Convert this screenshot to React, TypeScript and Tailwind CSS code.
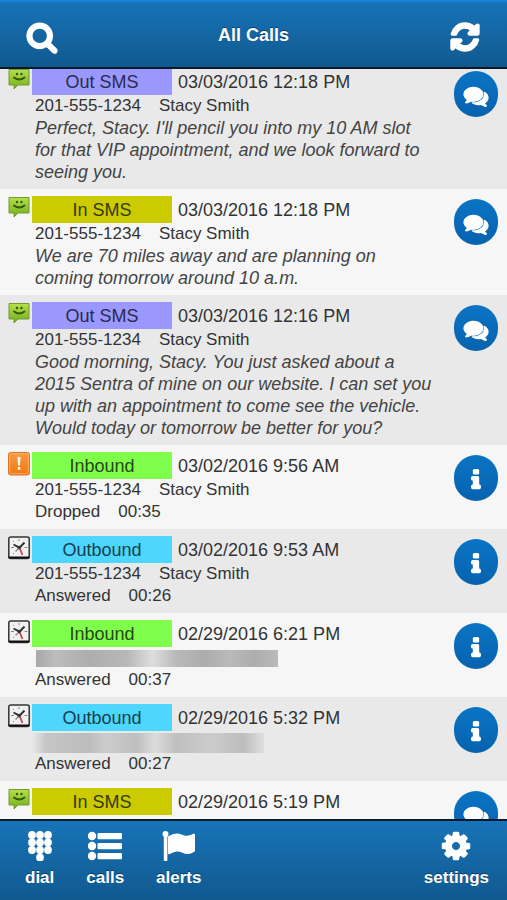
import type { ReactNode } from "react";

type Kind = "Out SMS" | "In SMS" | "Inbound" | "Outbound";

type Call = {
  id: number;
  kind: Kind;
  date: string;
  phone?: string;
  name?: string;
  message?: string;
  status?: "Answered" | "Dropped";
  duration?: string;
  mask?: "sharp" | "soft";
};

const calls: Call[] = [
  {
    id: 1,
    kind: "Out SMS",
    date: "03/03/2016 12:18 PM",
    phone: "201-555-1234",
    name: "Stacy Smith",
    message:
      "Perfect, Stacy. I'll pencil you into my 10 AM slot for that VIP appointment, and we look forward to seeing you.",
  },
  {
    id: 2,
    kind: "In SMS",
    date: "03/03/2016 12:18 PM",
    phone: "201-555-1234",
    name: "Stacy Smith",
    message: "We are 70 miles away and are planning on coming tomorrow around 10 a.m.",
  },
  {
    id: 3,
    kind: "Out SMS",
    date: "03/03/2016 12:16 PM",
    phone: "201-555-1234",
    name: "Stacy Smith",
    message:
      "Good morning, Stacy. You just asked about a 2015 Sentra of mine on our website. I can set you up with an appointment to come see the vehicle. Would today or tomorrow be better for you?",
  },
  {
    id: 4,
    kind: "Inbound",
    date: "03/02/2016 9:56 AM",
    phone: "201-555-1234",
    name: "Stacy Smith",
    status: "Dropped",
    duration: "00:35",
  },
  {
    id: 5,
    kind: "Outbound",
    date: "03/02/2016 9:53 AM",
    phone: "201-555-1234",
    name: "Stacy Smith",
    status: "Answered",
    duration: "00:26",
  },
  { id: 6, kind: "Inbound", date: "02/29/2016 6:21 PM", status: "Answered", duration: "00:37", mask: "sharp" },
  { id: 7, kind: "Outbound", date: "02/29/2016 5:32 PM", status: "Answered", duration: "00:27", mask: "soft" },
  { id: 8, kind: "In SMS", date: "02/29/2016 5:19 PM" },
];

const badgeColors: Record<Kind, string> = {
  "Out SMS": "bg-[#9a98fe] text-[#2b2b4a]",
  "In SMS": "bg-[#cbcb00] text-[#38380c]",
  Inbound: "bg-[#80fe4c] text-[#244716]",
  Outbound: "bg-[#4dd6fe] text-[#163e4c]",
};

function Glyph({ d, className, weight = 0 }: { d: string; className: string; weight?: number }) {
  return (
    <svg
      viewBox="0 0 1792 1792"
      fill="currentColor"
      stroke="currentColor"
      strokeWidth={weight}
      strokeLinejoin="round"
      className={`overflow-visible ${className}`}
      aria-hidden="true"
    >
      <path d={d} />
    </svg>
  );
}

const SEARCH =
  "M1216 832q0-185-131.5-316.5t-316.5-131.5-316.5 131.5-131.5 316.5 131.5 316.5 316.5 131.5 316.5-131.5 131.5-316.5zm512 832q0 52-38 90t-90 38q-54 0-90-38l-343-342q-179 124-399 124-143 0-273.5-55.5t-225-150-150-225-55.5-273.5 55.5-273.5 150-225 225-150 273.5-55.5 273.5 55.5 225 150 150 225 55.5 273.5q0 220-124 399l343 343q37 37 37 90z";
const REFRESH =
  "M1639 1056q0 5-1 7-64 268-268 434.5t-478 166.5q-146 0-282.5-55t-243.5-157l-129 129q-19 19-45 19t-45-19-19-45v-448q0-26 19-45t45-19h448q26 0 45 19t19 45-19 45l-137 137q71 66 161 102t187 36q134 0 250-65t186-179q11-17 53-117 8-23 30-23h192q13 0 22.5 9.5t9.5 22.5zm25-800v448q0 26-19 45t-45 19h-448q-26 0-45-19t-19-45 19-45l138-138q-148-137-349-137-134 0-250 65t-186 179q-11 17-53 117-8 23-30 23h-199q-13 0-22.5-9.5t-9.5-22.5v-7q65-268 270-434.5t480-166.5q146 0 284 55.5t245 156.5l130-129q19-19 45-19t45 19 19 45z";
const COG =
  "M1152 896q0-106-75-181t-181-75-181 75-75 181 75 181 181 75 181-75 75-181zm512-109v222q0 12-8 23t-20 13l-185 28q-19 54-39 91 35 50 107 138 10 12 10 25t-9 23q-27 37-99 108t-94 71q-12 0-26-9l-138-108q-44 23-91 38-16 136-29 186-7 28-36 28h-222q-14 0-24.5-8.5t-11.5-21.5l-28-184q-49-16-90-37l-141 107q-10 9-25 9-14 0-25-11-126-114-165-168-7-10-7-23 0-12 8-23 15-21 51-66.5t54-70.5q-27-50-41-99l-183-27q-13-2-21-12.5t-8-23.5v-222q0-12 8-23t19-13l186-28q14-46 39-92-40-57-107-138-10-12-10-24 0-10 9-23 26-36 98.5-107.5t94.5-71.5q13 0 26 10l138 107q44-23 91-38 16-136 29-186 7-28 36-28h222q14 0 24.5 8.5t11.5 21.5l28 184q49 16 90 37l142-107q9-9 24-9 13 0 25 10 129 119 165 170 7 8 7 22 0 12-8 23-15 21-51 66.5t-54 70.5q26 50 41 98l183 28q13 2 21 12.5t8 23.5z";
const INFO =
  "M1216 1344v128q0 26-19 45t-45 19h-512q-26 0-45-19t-19-45v-128q0-26 19-45t45-19h64v-384h-64q-26 0-45-19t-19-45v-128q0-26 19-45t45-19h384q26 0 45 19t19 45v576h64q26 0 45 19t19 45zm-128-1152v192q0 26-19 45t-45 19h-256q-26 0-45-19t-19-45v-192q0-26 19-45t45-19h256q26 0 45 19t19 45z";
const COMMENTS =
  "M1408 768q0 139-94 257t-256.5 186.5-353.5 68.5q-86 0-176-16-124 88-278 128-36 9-86 16h-3q-11 0-20.5-8t-11.5-21q-1-3-1-6.5t.5-6.5 2-6l2.5-5 3.5-5.5 4-5 4.5-5 4-4.5q5-6 23-25t26-29.5 22.5-29 25-38.5 20.5-44q-124-72-195-177t-71-224q0-139 94-257t256.5-186.5 353.5-68.5 353.5 68.5 256.5 186.5 94 257zm384 256q0 120-71 224.5t-195 176.5q10 24 20.5 44t25 38.5 22.5 29 26 29.5 23 25q1 1 4 4.5t4.5 5 4 5 3.5 5.5l2.5 5 2 6 .5 6.5-1 6.5q-3 14-13 22t-22 7q-50-7-86-16-154-40-278-128-90 16-176 16-271 0-472-132 58 4 88 4 161 0 309-45t264-129q125-92 192-212t67-254q0-77-23-152 129 71 204 178t75 230z";

function SmsIcon() {
  return (
    <svg viewBox="0 0 22 22" className="w-[22px] h-[22px]" aria-hidden="true">
      <defs>
        <linearGradient id="sms" x1="0" y1="0" x2="0" y2="1">
          <stop offset="0" stopColor="#b5e04a" />
          <stop offset="1" stopColor="#72ad1c" />
        </linearGradient>
      </defs>
      <path d="M1 1.5h20v15.500h-11l-4 4v-4h-5z" fill="url(#sms)" stroke="#6f9a35" strokeWidth="1" />
      <circle cx="9" cy="6" r="1.200" fill="#2f5a10" />
      <circle cx="13.500" cy="6" r="1.200" fill="#2f5a10" />
      <path d="M6 9.500q5.200 4 10.500 0" fill="none" stroke="#2f5a10" strokeWidth="1.900" strokeLinecap="round" />
    </svg>
  );
}

function DroppedIcon() {
  return (
    <svg viewBox="0 0 22 24" className="w-[22px] h-6" aria-hidden="true">
      <defs>
        <linearGradient id="drop" x1="0" y1="0" x2="0" y2="1">
          <stop offset="0" stopColor="#fb9a42" />
          <stop offset="1" stopColor="#f07810" />
        </linearGradient>
      </defs>
      <rect x="0.500" y="0.500" width="21" height="22.500" rx="2" fill="url(#drop)" stroke="#d9772a" />
      <rect x="1.700" y="1.700" width="18.600" height="20" rx="1" fill="none" stroke="#ffb874" strokeWidth="0.800" />
      <path d="M9.500 5h3l-.5 8.500h-2z" fill="#fff" />
      <rect x="9.700" y="15" width="2.600" height="2.700" fill="#fff" />
    </svg>
  );
}

function ClockIcon() {
  return (
    <svg viewBox="0 0 22 24" className="w-[22px] h-6" aria-hidden="true">
      <rect x="0.800" y="1" width="20.400" height="21.500" rx="2" fill="#f1f1f1" stroke="#333" strokeWidth="1.500" />
      <path d="M1.500 21.500h19" stroke="#111" strokeWidth="2.200" strokeLinecap="round" />
      <path d="M11 3v2M3 11.500h3M16.500 11.500h3M5 5l1 1M5 18l1-1" stroke="#888" strokeWidth="1" />
      <path d="M5.500 8.500l6 3.200L16.500 6.500" fill="none" stroke="#333" strokeWidth="1.900" />
      <path d="M11.500 11.500l-4 4" stroke="#888" strokeWidth="1.200" />
      <path d="M12 13l2.500 6" stroke="#c63a45" strokeWidth="1.700" />
      <circle cx="11.300" cy="11.500" r="1.800" fill="#333" />
    </svg>
  );
}

function DialIcon() {
  const dots = [
    [4, 4], [12, 4], [20, 4],
    [4, 11.5], [12, 11.5], [20, 11.5],
    [4, 19], [12, 19], [20, 19],
    [12, 26.5],
  ];
  return (
    <svg viewBox="0 0 24 30" fill="currentColor" className="h-[30px] w-6" aria-hidden="true">
      {dots.map(([x, y]) => (
        <circle key={`${x}-${y}`} cx={x} cy={y} r="3.900" />
      ))}
    </svg>
  );
}

function ListIcon() {
  return (
    <svg viewBox="0 0 34 32" fill="currentColor" className="w-[34px] h-8" aria-hidden="true">
      {[6, 16, 26].map((y) => (
        <g key={y}>
          <circle cx="4" cy={y} r="4.200" />
          <rect x="9.500" y={y - 3} width="24.500" height="6.200" rx="1" />
        </g>
      ))}
    </svg>
  );
}

function FlagIcon() {
  return (
    <svg viewBox="0 0 34 32" fill="currentColor" className="w-[34px] h-8" aria-hidden="true">
      <circle cx="3.500" cy="4" r="3" />
      <rect x="1.800" y="4" width="3.600" height="27" rx="1" />
      <path d="M6 6.500C11 4 15 2.500 19.500 4.500C24 6.500 27 6 31.500 3.800Q33 3.200 33 4.800V20.500Q33 21.500 32 22C28 24.200 24.500 24.800 20.500 22.800C16 20.600 12.500 21.500 8 24Q6 24.700 6 23.300Z" />
    </svg>
  );
}

function RoundButton({ sms }: { sms: boolean }) {
  return (
    <button
      type="button"
      aria-label={sms ? "Open conversation" : "Call details"}
      className="mt-[3px] flex h-[46px] w-11 shrink-0 items-center justify-center rounded-full bg-linear-to-b from-[#0b74c6] to-[#0762ad] text-white"
    >
      <Glyph d={sms ? COMMENTS : INFO} weight={90} className="mt-1 h-6 w-6" />
    </button>
  );
}

function Mask({ type }: { type: "sharp" | "soft" }) {
  if (type === "sharp") {
    return (
      <div className="ml-1 h-[17px] w-[242px] bg-[linear-gradient(90deg,#a8a8a8,#bcbcbc_8%,#adadad_22%,#b8b8b8_38%,#dedede_48%,#b9b9b9_58%,#acacac_70%,#bababa_80%,#adadad_90%,#bababa)]" />
    );
  }
  return (
    <div className="h-5 w-[232px] self-end bg-[linear-gradient(90deg,#e9e9e9,#c6c6c6_6%,#bcbcbc_24%,#cccccc_32%,#bebebe_45%,#dcdcdc_53%,#bfbfbf_62%,#cccccc_77%,#bdbdbd_91%,#dfdfdf)]" />
  );
}

function CallRow({ call }: { call: Call }) {
  const sms = call.kind.endsWith("SMS");
  return (
    <li className="flex items-start pt-[7px] pr-[9px] pb-1.5 pl-2 leading-[22px] odd:bg-[#e9e9e9] even:bg-[#f6f6f6]">
      <div className="w-6 shrink-0">
        {sms ? <SmsIcon /> : call.status === "Dropped" ? <DroppedIcon /> : <ClockIcon />}
      </div>
      <div className="min-w-0 flex-1">
        <div className="flex h-[27px] items-center gap-1.5 text-lg">
          <span className={`flex h-full w-[140px] items-center justify-center ${badgeColors[call.kind]}`}>
            {call.kind}
          </span>
          <time>{call.date}</time>
        </div>
        {call.mask && (
          <div className="flex h-[22px] items-center">
            <Mask type={call.mask} />
          </div>
        )}
        {call.phone && (
          <div className="flex gap-[18px] pl-[3px]">
            <span>{call.phone}</span>
            <span>{call.name}</span>
          </div>
        )}
        {call.message && (
          <p className="pr-[21px] pl-[3px] text-[18px] leading-[22px] text-[#444] italic">{call.message}</p>
        )}
        {call.status && (
          <div className="flex gap-[18px] pl-[3px]">
            <span>{call.status}</span>
            <span>{call.duration}</span>
          </div>
        )}
      </div>
      <RoundButton sms={sms} />
    </li>
  );
}

function NavButton({ label, children }: { label: string; children: ReactNode }) {
  return (
    <button type="button" className="flex flex-col items-center gap-1.5">
      <span className="flex h-8 items-center">{children}</span>
      <span className="leading-5 font-bold text-shadow-[0_-1px_0_#0a3c66]">{label}</span>
    </button>
  );
}

export default function App() {
  return (
    <div className="flex h-screen flex-col bg-[#f6f6f6] font-['Liberation_Sans',Arial,sans-serif] text-[17px] text-[#333]">
      <header className="relative z-10 flex items-center justify-between border-t-2 border-b-2 border-t-[#1687d6] border-b-[#07192a] bg-linear-to-b from-[#1774b8] to-[#11598f] px-6 py-4 text-white">
        <button type="button" aria-label="Search" className="flex h-[33px] w-9 items-center justify-center">
          <Glyph d={SEARCH} weight={90} className="mt-1 h-8 w-8" />
        </button>
        <h1 className="text-lg font-bold text-shadow-[0_-1px_0_#0a3c66]">All Calls</h1>
        <button type="button" aria-label="Refresh" className="flex h-[33px] w-9 items-center justify-center">
          <Glyph d={REFRESH} weight={110} className="mt-1 h-8 w-8" />
        </button>
      </header>

      <main className="min-h-0 flex-1 overflow-hidden">
        <ul className="-mt-2">
          {calls.map((call) => (
            <CallRow key={call.id} call={call} />
          ))}
        </ul>
      </main>

      <footer className="border-t-2 border-t-[#07192a] bg-linear-to-b from-[#1774b8] to-[#11598f] pt-[9px] pr-[18px] pb-3 pl-[25px] text-white">
        <nav className="flex items-start justify-between">
          <div className="flex gap-8">
            <NavButton label="dial">
              <DialIcon />
            </NavButton>
            <NavButton label="calls">
              <ListIcon />
            </NavButton>
            <NavButton label="alerts">
              <FlagIcon />
            </NavButton>
          </div>
          <NavButton label="settings">
            <Glyph d={COG} weight={60} className="h-8 w-8" />
          </NavButton>
        </nav>
      </footer>
    </div>
  );
}
